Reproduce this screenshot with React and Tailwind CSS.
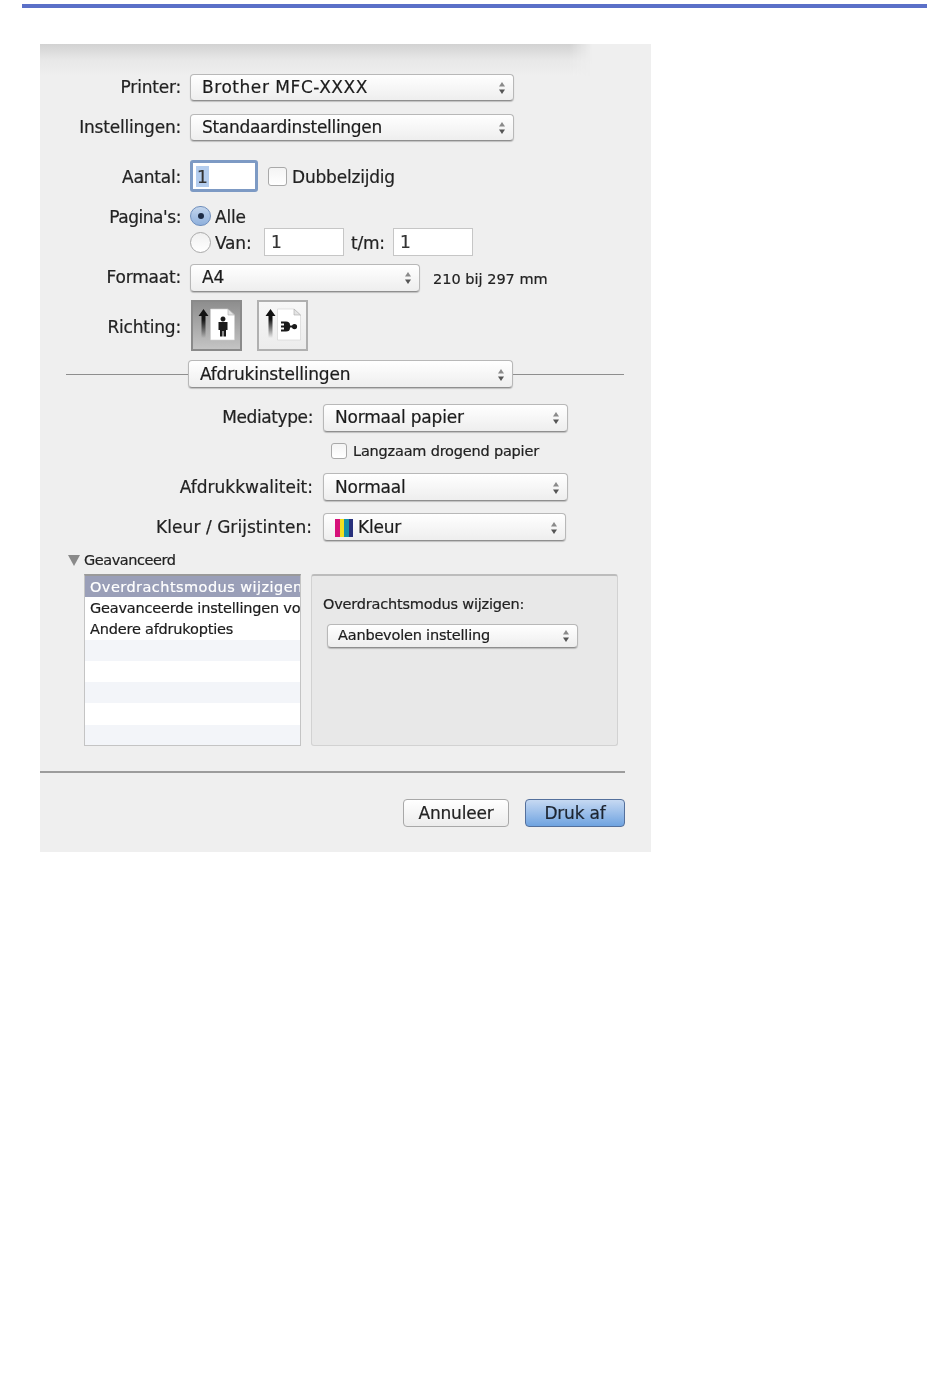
import React from 'react';

const Stepper = () => (
  <svg width="8" height="14" viewBox="0 0 8 14" className="shrink-0">
    <path d="M4 1 L7 5.5 H1 Z" fill="#8a8a8a" />
    <path d="M4 13 L7 8.5 H1 Z" fill="#555" />
  </svg>
);

const Select = ({ className, text, small, icon, textClass }) => (
  <div
    className={`flex items-center justify-between rounded-[4px] border border-[#b8b8b8] border-b-[#8f8f8f] bg-gradient-to-b from-white to-[#eeeeee] shadow-[0_1px_1px_rgba(0,0,0,0.2)] text-[#1c1c1c] ${small ? 'pl-[10px] pr-[7px] text-[14.5px]' : 'pl-[11px] pr-[7px] text-[17px]'} ${className}`}
  >
    <span className={`flex items-center gap-[5px] whitespace-nowrap ${textClass || ''}`}>
      {icon}
      {text}
    </span>
    <Stepper />
  </div>
);

const Label = ({ className, children }) => (
  <div className={`shrink-0 text-right text-[17px] text-[#222] whitespace-nowrap ${className}`}>{children}</div>
);

const Checkbox = ({ className }) => (
  <div className={`shrink-0 rounded-[3px] border border-[#a9a9a9] bg-gradient-to-b from-[#f4f4f4] to-white ${className}`} />
);

const TextInput = ({ className, children }) => (
  <div className={`flex items-center border border-[#c6c6c6] bg-white pl-[6px] pt-[2px] text-[17px] text-[#333] ${className}`}>{children}</div>
);

const OrientationIcon = ({ landscape }) => (
  <svg width="38" height="42" viewBox="0 0 38 42">
    <defs>
      <linearGradient id={landscape ? 'fadeB' : 'fadeA'} x1="0" y1="0" x2="0" y2="1">
        <stop offset="0" stopColor="#111" />
        <stop offset="0.35" stopColor="#111" />
        <stop offset="1" stopColor="#111" stopOpacity="0" />
      </linearGradient>
    </defs>
    <path
      d={landscape ? 'M6.5 4 L11.5 11 H8.5 V33 H4.5 V11 H1.5 Z' : 'M5.5 4 L10.5 11 H7.5 V33 H3.5 V11 H0.5 Z'}
      fill={`url(#${landscape ? 'fadeB' : 'fadeA'})`}
    />
    <path
      d={landscape ? 'M13.5 4 H30 L36.5 10 V35 H13.5 Z' : 'M12.5 4 H30 L36.5 10 V35 H12.5 Z'}
      fill="#fff"
      stroke="#d0d0d0"
      strokeWidth="0.6"
    />
    <path d="M30 4 V10 H36.5 Z" fill="#e4e4e4" stroke="#aaa" strokeWidth="0.6" />
    {landscape ? (
      <path d="M17 16.5 H22 Q26 16.5 26 20 V23 Q26 26.5 22 26.5 H17 V24.5 H20 V22.5 H17 V20.5 H20 V18.5 H17 Z M30.5 19 a2.6 2.6 0 1 1 0 5.2 a2.6 2.6 0 1 1 0 -5.2 Z M26 20.5 H28.5 V22.5 H26 Z" fill="#1a1a1a" />
    ) : (
      <path d="M25 11.5 a2.5 2.5 0 1 1 -0.01 0 Z M20.5 17 H29.5 V25 H28 V31.5 H25.5 V26 H24.5 V31.5 H22 V25 H20.5 Z" fill="#1a1a1a" />
    )}
  </svg>
);

const ColorStrip = () => (
  <span className="flex h-[18px] w-[18px]">
    <span className="flex-1 bg-[#d6127a]" />
    <span className="flex-1 bg-[#f0e020]" />
    <span className="flex-1 bg-[#1590a8]" />
    <span className="flex-1 bg-[#28307c]" />
  </span>
);

const listRows = [
  { text: 'Overdrachtsmodus wijzigen', cls: 'bg-[#9a9fb8] text-white h-[21px] tracking-[0.45px]' },
  { text: 'Geavanceerde instellingen voor', cls: 'bg-white text-[#1c1c1c] h-[21px]' },
  { text: 'Andere afdrukopties', cls: 'bg-white text-[#1c1c1c] h-[22px]' },
  { text: '', cls: 'bg-[#f3f5f9] h-[21px]' },
  { text: '', cls: 'bg-white h-[21px]' },
  { text: '', cls: 'bg-[#f3f5f9] h-[21px]' },
  { text: '', cls: 'bg-white h-[22px]' },
  { text: '', cls: 'bg-[#f3f5f9] h-[20px]' },
];

export default function App() {
  return (
    <div className="min-h-[1387px] bg-white pt-[4px] font-['DejaVu_Sans',sans-serif] tracking-[-0.2px] [-webkit-text-stroke:0.2px]">
      <div className="ml-[22px] h-[4px] w-[905px] bg-[#5b70c8]" />

      <div className="relative ml-[40px] mt-[36px] h-[808px] w-[611px] overflow-hidden bg-[#efefef] pt-[30px] blur-[0.35px]">
        {/* sheet shadow under the title bar */}
        <div className="absolute left-0 top-0 h-[32px] w-[552px] bg-gradient-to-b from-[#d2d2d2] via-[#e8e8e8] to-[#efefef] [mask-image:linear-gradient(to_right,black_96%,transparent)]" />

        <div className="relative">
          <div className="flex h-[27px] items-center">
            <Label className="w-[141px]">Printer:</Label>
            <Select className="ml-[9px] h-[27px] w-[324px]" text="Brother MFC-XXXX" textClass="tracking-[0.55px]" />
          </div>
          <div className="mt-[13px] flex h-[27px] items-center">
            <Label className="w-[141px]">Instellingen:</Label>
            <Select className="ml-[9px] h-[27px] w-[324px]" text="Standaardinstellingen" textClass="tracking-[-0.3px]" />
          </div>

          <div className="mt-[19px] flex h-[32px] items-center">
            <Label className="w-[141px] pt-[4px]">Aantal:</Label>
            <div className="ml-[9px] flex h-[32px] w-[68px] items-center rounded-[3px] border-[3px] border-[#7d9ac4] bg-white pl-[3px] text-[17px] text-[#333]">
              <span className="bg-[#b4cdee] px-[1px] pt-[1px] leading-[20px]">1</span>
            </div>
            <Checkbox className="ml-[10px] h-[19px] w-[19px]" />
            <span className="ml-[5px] pt-[4px] text-[17px] text-[#222]">Dubbelzijdig</span>
          </div>

          <div className="mt-[14px] flex h-[20px] items-center">
            <Label className="w-[141px] pt-[4px] tracking-[-0.45px]">Pagina's:</Label>
            <div className="ml-[9px] flex h-[20px] w-[21px] items-center justify-center rounded-full border border-[#6f8fbd] bg-gradient-to-b from-[#c3d5ec] to-[#8fb0dc]">
              <div className="h-[6px] w-[6px] rounded-full bg-[#1d2b44]" />
            </div>
            <span className="ml-[4px] pt-[4px] text-[17px] text-[#222]">Alle</span>
          </div>
          <div className="mt-[2px] flex h-[28px] items-center">
            <div className="ml-[150px] h-[21px] w-[21px] rounded-full border border-[#a9a9a9] bg-gradient-to-b from-[#f0f0f0] to-white" />
            <span className="ml-[4px] w-[49px] pt-[4px] text-[17px] text-[#222]">Van:</span>
            <TextInput className="h-[28px] w-[80px]">1</TextInput>
            <span className="ml-[7px] w-[42px] pt-[4px] text-[17px] text-[#222]">t/m:</span>
            <TextInput className="h-[28px] w-[80px]">1</TextInput>
          </div>

          <div className="mt-[8px] flex h-[28px] items-center">
            <Label className="w-[141px]">Formaat:</Label>
            <Select className="ml-[9px] h-[28px] w-[230px]" text="A4" />
            <span className="ml-[13px] pt-[4px] text-[14.5px] tracking-[0px] text-[#222]">210 bij 297 mm</span>
          </div>

          <div className="mt-[8px] flex h-[51px] items-center">
            <Label className="w-[141px] pt-[4px]">Richting:</Label>
            <div className="ml-[10px] flex h-[51px] w-[51px] items-center justify-center border-2 border-[#8a8a8a] bg-gradient-to-b from-[#8e8e8e] to-[#c4c4c4]">
              <OrientationIcon />
            </div>
            <div className="ml-[15px] flex h-[51px] w-[51px] items-center justify-center border-2 border-[#b0b0b0] bg-gradient-to-b from-[#f7f7f7] to-[#ececec]">
              <OrientationIcon landscape />
            </div>
          </div>

          <div className="ml-[26px] mt-[9px] flex h-[28px] w-[558px] items-center">
            <div className="h-px flex-1 bg-[#8e8e8e]" />
            <Select className="h-[28px] w-[325px] pt-[2px]" text="Afdrukinstellingen" />
            <div className="h-px w-[111px] bg-[#8e8e8e]" />
          </div>

          <div className="mt-[16px] flex h-[28px] items-center">
            <Label className="w-[273px] tracking-[-0.4px]">Mediatype:</Label>
            <Select className="ml-[10px] h-[28px] w-[245px]" text="Normaal papier" />
          </div>
          <div className="mt-[11px] flex h-[16px] items-center pl-[291px]">
            <Checkbox className="h-[16px] w-[16px]" />
            <span className="ml-[6px] pt-[2px] text-[14.5px] text-[#222]">Langzaam drogend papier</span>
          </div>
          <div className="mt-[14px] flex h-[28px] items-center">
            <Label className="w-[273px] pt-[2px] tracking-[0px]">Afdrukkwaliteit:</Label>
            <Select className="ml-[10px] h-[28px] w-[245px] pt-[2px]" text="Normaal" />
          </div>
          <div className="mt-[12px] flex h-[28px] items-center">
            <Label className="w-[272px] pt-[2px] tracking-[0.05px]">Kleur / Grijstinten:</Label>
            <Select className="ml-[11px] h-[28px] w-[243px] pt-[2px]" text="Kleur" icon={<ColorStrip />} />
          </div>

          <div className="ml-[28px] mt-[11px] flex h-[16px] items-center">
            <svg width="12" height="11" viewBox="0 0 12 11">
              <path d="M0 0 H12 L6 11 Z" fill="#8a8a8a" />
            </svg>
            <span className="ml-[4px] pt-[2px] text-[14.5px] tracking-[-0.45px] text-[#222]">Geavanceerd</span>
          </div>

          <div className="ml-[44px] mt-[6px] flex h-[172px] w-[534px] gap-[10px]">
            <div className="w-[217px] overflow-hidden border border-[#c4c4c4] border-t-2 border-t-[#9a9a9a]">
              {listRows.map((row, i) => (
                <div key={i} className={`flex items-center overflow-hidden whitespace-nowrap pl-[5px] pt-[2px] text-[14.5px] ${row.cls}`}>
                  {row.text}
                </div>
              ))}
            </div>
            <div className="flex-1 rounded-[3px] border border-[#d2d2d2] border-t-2 border-t-[#bcbcbc] bg-[#e8e8e8] pl-[11px] pt-[19px]">
              <div className="h-[18px] text-[14.5px] leading-[18px] text-[#222]">Overdrachtsmodus wijzigen:</div>
              <Select small className="ml-[4px] mt-[11px] h-[24px] w-[251px]" text="Aanbevolen instelling" />
            </div>
          </div>

          <div className="mt-[25px] h-[2px] w-[585px] bg-[#9c9c9c]" />

          <div className="mt-[26px] flex h-[28px] w-[585px] justify-end gap-[16px]">
            <div className="flex h-[28px] w-[106px] items-center justify-center rounded-[4px] border border-[#a8a8a8] bg-gradient-to-b from-white to-[#ececec] pt-[2px] text-[17px] text-[#222]">
              Annuleer
            </div>
            <div className="flex h-[28px] w-[100px] items-center justify-center rounded-[4px] border border-[#54709c] bg-gradient-to-b from-[#c6d9f2] to-[#6fa3e0] pt-[2px] text-[17px] text-[#1c2430]">
              Druk af
            </div>
          </div>
        </div>
      </div>
    </div>
  );
}
